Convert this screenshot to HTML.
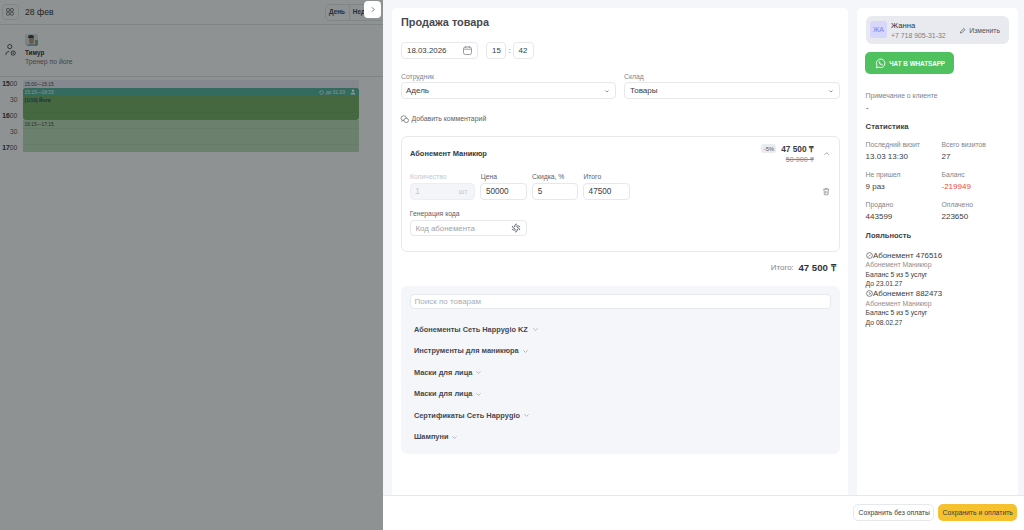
<!DOCTYPE html>
<html><head><meta charset="utf-8">
<style>
*{margin:0;padding:0;box-sizing:border-box}
html,body{width:1024px;height:530px;overflow:hidden;font-family:"Liberation Sans",sans-serif;background:#fff}
.a{position:absolute}
.t{position:absolute;white-space:nowrap;line-height:1}
svg{position:absolute;overflow:visible}
#left{position:absolute;left:0;top:0;width:383px;height:530px;background:#fff;overflow:hidden}
#ov{position:absolute;left:0;top:0;width:383px;height:530px;background:rgba(30,38,38,0.5)}
#panel{position:absolute;left:383px;top:0;width:641px;height:530px;background:#f5f6fa}
.card{position:absolute;background:#fff;border-radius:5px}
.inp{position:absolute;border:1px solid #e6e8ee;border-radius:4px;background:#fff}
.lbl{position:absolute;white-space:nowrap;line-height:1;font-size:6.8px;color:#80848b}
.val{position:absolute;white-space:nowrap;line-height:1;font-size:8px;color:#3a3d43}
.cat{position:absolute;white-space:nowrap;line-height:1;font-size:7.4px;font-weight:bold;color:#45484e}
</style></head><body>
<div id="left">
  <!-- header -->
  <div class="a" style="left:2px;top:3.5px;width:16.5px;height:16.5px;border:1px solid #e2e4e8;border-radius:4px"></div>
  <svg style="left:6.2px;top:8.1px" width="8" height="8" viewBox="0 0 8 8"><g fill="none" stroke="#4a4a4a" stroke-width="0.75"><circle cx="2" cy="2" r="1.6"/><circle cx="5.9" cy="2" r="1.6"/><circle cx="2" cy="5.7" r="1.6"/><circle cx="5.9" cy="5.7" r="1.6"/></g></svg>
  <div class="t" style="left:25px;top:7.9px;font-size:8.7px;color:#222">28 фев</div>
  <div class="a" style="left:324.5px;top:3.5px;width:70px;height:17px;border:1px solid #e2e4e8;border-radius:5px"></div>
  <div class="a" style="left:348.5px;top:4px;width:1px;height:16px;background:#e2e4e8"></div>
  <div class="t" style="left:329px;top:9px;font-size:6.4px;font-weight:bold;color:#333">День</div>
  <div class="t" style="left:352.8px;top:9px;font-size:6.4px;font-weight:bold;color:#333">Неделя</div>
  <div class="a" style="left:0;top:24px;width:383px;height:1px;background:#e1e3e6"></div>
  <!-- staff -->
  <div class="a" style="left:25px;top:33.5px;width:12.8px;height:12.8px;border-radius:2px;background:#d8e2e4;overflow:hidden">
    <div class="a" style="left:9.5px;top:6px;width:3.3px;height:6.8px;background:#7fa37a"></div>
    <div class="a" style="left:3.6px;top:2.6px;width:5.6px;height:7.6px;border-radius:45%;background:#b98b74"></div>
    <div class="a" style="left:3.3px;top:1.3px;width:6.2px;height:3px;border-radius:3px 3px 1px 1px;background:#3b2d26"></div>
    <div class="a" style="left:1.5px;top:10px;width:9.8px;height:3px;border-radius:2px 2px 0 0;background:#8ea4c0"></div>
  </div>
  <svg style="left:4.8px;top:44.3px" width="11" height="12" viewBox="0 0 11 12"><g fill="none" stroke="#333" stroke-width="0.9"><circle cx="4.8" cy="2.6" r="2.1"/><path d="M0.7 11 Q0.7 7.6 4.2 7.4"/><circle cx="8.2" cy="9.1" r="2.1"/><path d="M8.2 8.3v1.6"/></g></svg>
  <div class="t" style="left:25px;top:50.4px;font-size:6.3px;font-weight:bold;color:#222">Тимур</div>
  <div class="t" style="left:25px;top:58.8px;font-size:6.8px;color:#666">Тренер по йоге</div>
  <div class="a" style="left:0;top:76px;width:383px;height:1px;background:#e1e3e6"></div>
  <!-- times -->
  <div class="t" style="left:2.3px;top:81px;font-size:6.7px;color:#444"><b style="color:#222">15</b>00</div>
  <div class="t" style="left:10px;top:97px;font-size:6.7px;color:#555">30</div>
  <div class="t" style="left:2.3px;top:113px;font-size:6.7px;color:#444"><b style="color:#222">16</b>00</div>
  <div class="t" style="left:10px;top:129.1px;font-size:6.7px;color:#555">30</div>
  <div class="t" style="left:2.3px;top:145.2px;font-size:6.7px;color:#444"><b style="color:#222">17</b>00</div>
  <!-- events -->
  <div class="a" style="left:23px;top:80px;width:336px;height:8px;background:#ecedf8"></div>
  <div class="t" style="left:24.6px;top:83.2px;font-size:4.85px;color:#333">15:00—15:15</div>
  <div class="a" style="left:23px;top:88px;width:336px;height:32px;border-radius:3px;background:#6eaa5a;overflow:hidden">
    <div class="a" style="left:0;top:0;width:336px;height:7.7px;background:#48b098"></div>
  </div>
  <div class="t" style="left:24.6px;top:91px;font-size:4.85px;color:#ffffff">15:15—16:15</div>
  <div class="t" style="left:24.6px;top:97.5px;font-size:5px;font-weight:bold;color:#123a5a">(1/10) Йога</div>
  <svg style="left:319px;top:89.5px" width="5" height="5" viewBox="0 0 5 5"><circle cx="2.5" cy="2.5" r="1.8" fill="none" stroke="#fff" stroke-width="0.7"/></svg>
  <div class="t" style="left:325.7px;top:91px;font-size:4.9px;color:#fff">до 31.03</div>
  <svg style="left:350px;top:89px" width="6" height="6" viewBox="0 0 6 6"><g fill="#fff"><circle cx="3" cy="1.8" r="1.3"/><path d="M0.5 5.5 Q0.8 3.5 3 3.5 Q5.2 3.5 5.5 5.5Z"/></g></svg>
  <div class="a" style="left:23px;top:120px;width:336px;height:32px;background:#b8dcb4"></div>
  <div class="t" style="left:24.6px;top:122.8px;font-size:4.85px;color:#333">16:15—17:15</div>
  <div class="a" style="left:23px;top:112px;width:336px;height:0.6px;background:rgba(0,0,0,0.045)"></div>
  <div class="a" style="left:23px;top:128px;width:336px;height:0.6px;background:rgba(0,0,0,0.04)"></div>
  <div class="a" style="left:23px;top:144px;width:336px;height:0.6px;background:rgba(0,0,0,0.04)"></div>
</div>
<div id="ov"></div>
<!-- expand button -->
<div class="a" style="left:364px;top:1px;width:17px;height:17px;background:#fff;border-radius:4px"></div>
<svg style="left:370.5px;top:6.8px" width="4" height="5" viewBox="0 0 4 5"><path d="M1 0.3 L3.2 2.5 L1 4.7" fill="none" stroke="#555" stroke-width="0.8"/></svg>

<div id="panel">
  <div class="card" style="left:9px;top:7.5px;width:456px;height:540px"></div>
  <div class="card" style="left:474px;top:7.5px;width:161px;height:540px"></div>
</div>

<!-- main card content (page coordinates) -->
<div class="t" style="left:401px;top:17.2px;font-size:10.9px;font-weight:bold;color:#46494f">Продажа товара</div>
<div class="inp" style="left:401px;top:42px;width:77px;height:16.5px"></div>
<div class="val" style="left:407px;top:47.1px;font-size:7.9px">18.03.2026</div>
<svg style="left:463px;top:45.8px" width="9" height="9" viewBox="0 0 9 9"><g fill="none" stroke="#8e9299" stroke-width="0.9"><rect x="0.5" y="1" width="8" height="7.5" rx="1.8"/><path d="M0.5 3.2h8M2.7 0v2M6.3 0v2"/></g></svg>
<div class="inp" style="left:486px;top:42px;width:20px;height:16.5px"></div>
<div class="val" style="left:492px;top:47.1px;font-size:7.9px">15</div>
<div class="t" style="left:508.6px;top:47.1px;font-size:7.9px;color:#666">:</div>
<div class="inp" style="left:513px;top:42px;width:20.5px;height:16.5px"></div>
<div class="val" style="left:518.5px;top:47.1px;font-size:7.9px">42</div>

<div class="lbl" style="left:401px;top:73.7px">Сотрудник</div>
<div class="inp" style="left:401px;top:82.3px;width:214.5px;height:17.2px"></div>
<div class="val" style="left:406px;top:87.4px">Адель</div>
<svg style="left:604.5px;top:89.5px" width="4" height="3" viewBox="0 0 4 3"><path d="M0.4 0.5 L2 2.1 L3.6 0.5" fill="none" stroke="#666" stroke-width="0.7"/></svg>
<div class="lbl" style="left:624px;top:73.7px">Склад</div>
<div class="inp" style="left:624px;top:82.3px;width:216px;height:17.2px"></div>
<div class="val" style="left:630px;top:87.4px">Товары</div>
<svg style="left:828.5px;top:89.5px" width="4" height="3" viewBox="0 0 4 3"><path d="M0.4 0.5 L2 2.1 L3.6 0.5" fill="none" stroke="#666" stroke-width="0.7"/></svg>

<svg style="left:400.8px;top:115.6px" width="8" height="7" viewBox="0 0 8 7"><g fill="none" stroke="#777" stroke-width="0.8"><path d="M3.2 4.5 A2.7 2.4 0 1 1 5.4 2.2"/><path d="M0.6 5.6 L1.2 4.2"/><ellipse cx="5.2" cy="4.4" rx="2.4" ry="2.1"/></g></svg>
<div class="lbl" style="left:411.4px;top:116.4px;font-size:6.9px;color:#5d6067">Добавить комментарий</div>

<!-- product card -->
<div class="a" style="left:400.7px;top:136.2px;width:439px;height:116.3px;border:1px solid #e7e9ee;border-radius:6px"></div>
<div class="val" style="left:410px;top:150px;font-size:7.45px;font-weight:bold;color:#35383d">Абонемент Маникюр</div>
<div class="a" style="left:761.2px;top:144px;width:15.3px;height:9.3px;background:#e9ecf2;border-radius:2.5px"></div>
<div class="t" style="left:763.8px;top:146.5px;font-size:5.84px;color:#555">-5%</div>
<div class="val" style="left:781.2px;top:145px;font-size:8.3px;font-weight:bold">47 500 ₸</div>
<div class="t" style="left:785.8px;top:156.1px;font-size:7.2px;color:#888;text-decoration:line-through">50 000 ₸</div>
<svg style="left:824px;top:152px" width="5.5" height="3.5" viewBox="0 0 5.5 3.5"><path d="M0.4 3 L2.75 0.6 L5.1 3" fill="none" stroke="#888" stroke-width="0.7"/></svg>

<div class="lbl" style="left:410px;top:174.1px;color:#c5c8ce">Количество</div>
<div class="lbl" style="left:480.7px;top:174.1px;color:#5d6067">Цена</div>
<div class="lbl" style="left:532px;top:174.1px;color:#5d6067">Скидка, %</div>
<div class="lbl" style="left:583.4px;top:174.1px;color:#5d6067">Итого</div>
<div class="inp" style="left:409.8px;top:183.2px;width:65.7px;height:16.8px;background:#f4f5f9;border-color:#eceef2"></div>
<div class="val" style="left:415.3px;top:188px;font-size:8.2px;color:#c5c8ce">1</div>
<div class="t" style="left:458.8px;top:188.3px;font-size:7px;color:#c5c8ce">шт</div>
<div class="inp" style="left:480.4px;top:183.2px;width:46.8px;height:16.8px"></div>
<div class="val" style="left:485.9px;top:188px;font-size:8.2px">50000</div>
<div class="inp" style="left:531.6px;top:183.2px;width:46.8px;height:16.8px"></div>
<div class="val" style="left:537.7px;top:188px;font-size:8.2px">5</div>
<div class="inp" style="left:583.4px;top:183.2px;width:46.8px;height:16.8px"></div>
<div class="val" style="left:588.6px;top:188px;font-size:8.2px">47500</div>
<svg style="left:823.4px;top:188.3px" width="6.5" height="7.2" viewBox="0 0 6.5 7.2"><g fill="none" stroke="#888" stroke-width="0.7"><path d="M0.3 1.3h5.9M2.2 1.3V0.4h2.1v0.9M1 1.3l0.4 5.5h3.7l0.4-5.5M2.5 3v2.5M4 3v2.5"/></g></svg>

<div class="lbl" style="left:409.8px;top:210.6px;color:#5d6067">Генерация кода</div>
<div class="inp" style="left:409.8px;top:219.6px;width:117.6px;height:16.4px"></div>
<div class="val" style="left:415.4px;top:224.7px;font-size:7.87px;color:#a0a4ab">Код абонемента</div>
<svg style="left:510.9px;top:223.2px" width="10" height="10" viewBox="0 0 10 10"><g fill="none" stroke="#6f737a" stroke-width="1" stroke-linecap="round"><path d="M5.6 0.9 Q3.4 1.2 3.3 3.9"/><path d="M8.9 3.6 Q7.4 1.9 5.1 3.1"/><path d="M8.7 6.8 Q8.4 4.5 6.4 4.2"/><path d="M4.4 9.1 Q6.6 8.8 6.7 6.1"/><path d="M1.1 6.4 Q2.6 8.1 4.9 6.9"/><path d="M1.3 3.2 Q1.6 5.5 3.6 5.8"/></g></svg>

<div class="t" style="left:770.8px;top:263.8px;font-size:7.94px;color:#80848b">Итого:</div>
<div class="t" style="left:798.5px;top:262.6px;font-size:9.6px;font-weight:bold;color:#2f3237">47 500 ₸</div>

<!-- search block -->
<div class="a" style="left:400.5px;top:286px;width:439.5px;height:168px;background:#f5f6fa;border-radius:6px"></div>
<div class="inp" style="left:409.5px;top:293.5px;width:421.7px;height:15.9px"></div>
<div class="t" style="left:414.6px;top:298.1px;font-size:8px;color:#a9adb5">Поиск по товарам</div>
<div class="cat" style="left:413.9px;top:325.9px">Абонементы Сеть Happygio KZ</div>
<div class="cat" style="left:413.9px;top:347.2px">Инструменты для маникюра</div>
<div class="cat" style="left:413.9px;top:368.7px">Маски для лица</div>
<div class="cat" style="left:413.9px;top:390.2px">Маски для лица</div>
<div class="cat" style="left:413.9px;top:411.7px">Сертификаты Сеть Happygio</div>
<div class="cat" style="left:413.9px;top:433.2px">Шампуни</div>
<svg style="left:532.5px;top:328.3px" width="5" height="3" viewBox="0 0 5 3"><path d="M0.4 0.4 L2.5 2.4 L4.6 0.4" fill="none" stroke="#9a9ea5" stroke-width="0.7"/></svg>
<svg style="left:522.5px;top:349.6px" width="5" height="3" viewBox="0 0 5 3"><path d="M0.4 0.4 L2.5 2.4 L4.6 0.4" fill="none" stroke="#9a9ea5" stroke-width="0.7"/></svg>
<svg style="left:476px;top:371.1px" width="5" height="3" viewBox="0 0 5 3"><path d="M0.4 0.4 L2.5 2.4 L4.6 0.4" fill="none" stroke="#9a9ea5" stroke-width="0.7"/></svg>
<svg style="left:476px;top:392.6px" width="5" height="3" viewBox="0 0 5 3"><path d="M0.4 0.4 L2.5 2.4 L4.6 0.4" fill="none" stroke="#9a9ea5" stroke-width="0.7"/></svg>
<svg style="left:523.5px;top:414.1px" width="5" height="3" viewBox="0 0 5 3"><path d="M0.4 0.4 L2.5 2.4 L4.6 0.4" fill="none" stroke="#9a9ea5" stroke-width="0.7"/></svg>
<svg style="left:451.5px;top:435.6px" width="5" height="3" viewBox="0 0 5 3"><path d="M0.4 0.4 L2.5 2.4 L4.6 0.4" fill="none" stroke="#9a9ea5" stroke-width="0.7"/></svg>

<!-- right card -->
<div class="a" style="left:865.8px;top:16.2px;width:143px;height:27.6px;background:#e8eaf0;border-radius:6px"></div>
<div class="a" style="left:869.8px;top:21.4px;width:17.2px;height:17.1px;background:#d6d7fb;border-radius:3px"></div>
<div class="t" style="left:872.9px;top:27.1px;font-size:6.85px;color:#7d80f2">ЖА</div>
<div class="val" style="left:891px;top:22.2px;font-size:7.7px;color:#33363b">Жанна</div>
<div class="t" style="left:891px;top:32.6px;font-size:6.9px;color:#7a7e85">+7 718 905-31-32</div>
<svg style="left:960px;top:27.9px" width="5.5" height="5.5" viewBox="0 0 5.5 5.5"><path d="M0.5 5 L0.7 3.6 L3.8 0.5 L5 1.7 L1.9 4.8Z" fill="none" stroke="#555" stroke-width="0.7"/></svg>
<div class="t" style="left:969.3px;top:28.1px;font-size:6.8px;color:#4d5057">Изменить</div>

<div class="a" style="left:865.1px;top:52.2px;width:88.9px;height:21.8px;background:#4fc15f;border-radius:5px"></div>
<svg style="left:875px;top:58.2px" width="11" height="11" viewBox="0 0 11 11"><g fill="none" stroke="#fff" stroke-width="0.9"><path d="M1.3 9.8 L2 7.6 A4.3 4.3 0 1 1 3.6 9.1 Z"/><path d="M3.8 3.6 Q3.8 6.4 7.1 7.3 L7.6 6.4 L6.6 5.9 L6.1 6.4 Q4.9 5.8 4.6 4.7 L5.1 4.3 L4.6 3.3 Z" stroke-width="0.6"/></g></svg>
<div class="t" style="left:889.2px;top:60.8px;font-size:6.27px;font-weight:bold;color:#fff">ЧАТ В WHATSAPP</div>

<div class="lbl" style="left:865.6px;top:92.9px">Примечание о клиенте</div>
<div class="val" style="left:866px;top:103.6px">-</div>
<div class="val" style="left:865.6px;top:123.3px;font-size:7.7px;font-weight:bold;color:#3d4046">Статистика</div>
<div class="lbl" style="left:865.6px;top:141.5px">Последний визит</div>
<div class="val" style="left:865.6px;top:153.2px">13.03 13:30</div>
<div class="lbl" style="left:941.5px;top:141.5px">Всего визитов</div>
<div class="val" style="left:941.5px;top:153.2px">27</div>
<div class="lbl" style="left:865.6px;top:171.7px">Не пришел</div>
<div class="val" style="left:865.6px;top:182.6px">9 раз</div>
<div class="lbl" style="left:941.5px;top:171.7px">Баланс</div>
<div class="val" style="left:941.5px;top:182.6px;color:#e5484d">-219949</div>
<div class="lbl" style="left:865.6px;top:201.9px">Продано</div>
<div class="val" style="left:865.6px;top:212.5px">443599</div>
<div class="lbl" style="left:941.5px;top:201.9px">Оплачено</div>
<div class="val" style="left:941.5px;top:212.5px">223650</div>
<div class="val" style="left:865.6px;top:232.2px;font-size:7.6px;font-weight:bold;color:#3d4046">Лояльность</div>

<svg style="left:865.9px;top:251.6px" width="7" height="7" viewBox="0 0 7 7"><g fill="none" stroke="#555" stroke-width="0.7"><circle cx="3.5" cy="3.5" r="2.9"/><path d="M2.6 4.5 L4.5 2.6"/></g></svg>
<div class="val" style="left:872.9px;top:251.5px;font-size:7.9px">Абонемент 476516</div>
<div class="lbl" style="left:865.6px;top:261.7px;color:#8a8e95">Абонемент Маникюр</div>
<div class="lbl" style="left:865.6px;top:271.5px;color:#3a3d42">Баланс 5 из 5 услуг</div>
<div class="lbl" style="left:865.6px;top:280.7px;color:#3a3d42">До 23.01.27</div>
<svg style="left:865.9px;top:290px" width="7" height="7" viewBox="0 0 7 7"><g fill="none" stroke="#555" stroke-width="0.7"><circle cx="3.5" cy="3.5" r="2.9"/><path d="M2.8 2.4 L4.6 3.5 L2.8 4.6"/></g></svg>
<div class="val" style="left:872.9px;top:290px;font-size:7.9px">Абонемент 882473</div>
<div class="lbl" style="left:865.6px;top:300.8px;color:#8a8e95">Абонемент Маникюр</div>
<div class="lbl" style="left:865.6px;top:309.6px;color:#3a3d42">Баланс 5 из 5 услуг</div>
<div class="lbl" style="left:865.6px;top:319.7px;color:#3a3d42">До 08.02.27</div>

<!-- footer -->
<div class="a" style="left:383px;top:495px;width:641px;height:35px;background:#fff;border-top:1px solid #e6e8ee"></div>
<div class="a" style="left:853.4px;top:504.3px;width:80.2px;height:17px;border:1px solid #e6e8ee;border-radius:5px;background:#fff"></div>
<div class="t" style="left:858.5px;top:509.6px;font-size:6.82px;color:#3a3d42">Сохранить без оплаты</div>
<div class="a" style="left:938px;top:504.3px;width:79.4px;height:17px;border-radius:5px;background:#f5c12e"></div>
<div class="t" style="left:942.6px;top:509.6px;font-size:6.84px;color:#3a3d42">Сохранить и оплатить</div>
</body></html>
